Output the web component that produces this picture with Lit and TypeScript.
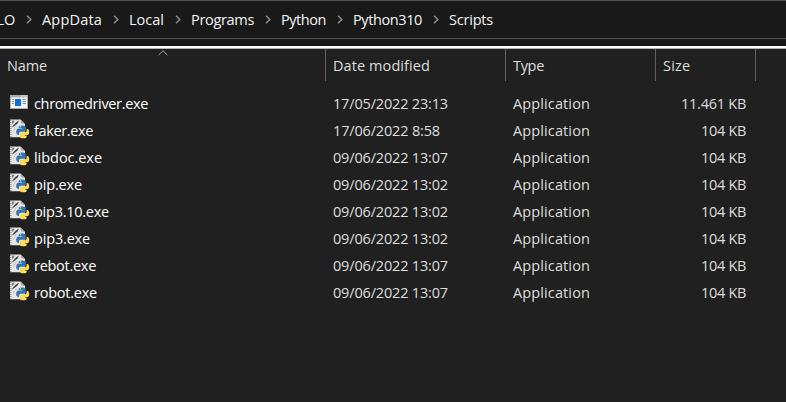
import { LitElement, html, css, svg } from "lit";
import { customElement, property } from "lit/decorators.js";

/* One line of text, spaced to an exact width. */
@customElement("fit-text")
class FitText extends LitElement {
  @property() text = "";
  @property({ type: Number }) w = 0;
  static styles = css`
    :host { display: inline-block; white-space: pre; }
    span { display: inline-block; }
  `;
  render() {
    return html`<span>${this.text}</span>`;
  }
  firstUpdated() {
    const s = this.renderRoot.querySelector("span") as HTMLElement;
    const natural = s.getBoundingClientRect().width;
    s.style.letterSpacing = `${(this.w - natural) / this.text.length}px`;
  }
}

const crumbs: [string, number][] = [
  ["AppData", 60], ["Local", 35], ["Programs", 63],
  ["Python", 45], ["Python310", 69], ["Scripts", 44],
];
const files: [string, number, string, number, string, number][] = [
  ["chromedriver.exe", 114, "17/05/2022 23:13", 115, "11.461 KB", 65],
  ["faker.exe", 59, "17/06/2022 8:58", 107, "104 KB", 45],
  ["libdoc.exe", 68, "09/06/2022 13:07", 115, "104 KB", 45],
  ["pip.exe", 48, "09/06/2022 13:02", 115, "104 KB", 45],
  ["pip3.10.exe", 75, "09/06/2022 13:02", 115, "104 KB", 45],
  ["pip3.exe", 56, "09/06/2022 13:02", 115, "104 KB", 45],
  ["rebot.exe", 62, "09/06/2022 13:07", 115, "104 KB", 45],
  ["robot.exe", 63, "09/06/2022 13:07", 115, "104 KB", 45],
];

const chevron = html`<svg class="chev" width="6" height="9" viewBox="0 0 6 9">
  <path d="M1 .7 4.8 4.5 1 8.3" fill="none" stroke="#8c8c8c" stroke-width="1.5" /></svg>`;

const appIcon = html`<svg width="20" height="20" viewBox="0 0 20 20">
  ${svg`<path d="M0 3h18v14H0z" fill="#a9adb0"/>
  <path d="M1 5.500h16V16H1z" fill="#f4f4f4"/>
  <path d="M11 4h1.300M13.300 4h1.300M15.400 4h1.300" stroke="#fff" stroke-width="1.200"/>
  <path d="M5 7h6v7H5z" fill="#0873d4"/>
  <path d="M2 7.500h2M2 9.500h2M2 11.500h2M12.300 7.500H16M12.300 9.500H16M12.300 11.500H16" stroke="#8e9295"/>`}</svg>`;

const pyIcon = html`<svg width="20" height="20" viewBox="0 0 20 20">
  ${svg`<path d="M0 .4h10.500L15 5v13.200H0z" fill="#e6e6e6"/>
  <path d="M10.500 .4 15 5l-4-.8z" fill="#a8a8a8"/>
  <path d="M.8 1v17" stroke="#888" stroke-width="1.200" stroke-dasharray="1 1"/>
  <path d="M1.500 9 3.500 6 6 3.500 9 1.500 7.500 4.500 5 6.500z" fill="#3c3c3c"/>
  <path d="M2 1.800 4.500 1.500 3.500 4 2 5z" fill="#777"/>
  <path d="M3 13 6.500 7" stroke="#bbb" stroke-width=".8"/>
  <g transform="translate(6.200 6.300)">
    <path d="M3 .8C4-.1 8-.1 9 .8c.5.500.6 1 .6 1.700v2.300c0 1-.7 1.700-1.700 1.700H4.500c-1 0-1.700.8-1.700 1.700v1.400H2C.5 9.600 0 8.200 0 6.500s.8-3.200 2.500-3.200H6v-.6H2.500c0-.9 0-1.400.5-1.900z" fill="#3475ae"/>
    <path d="M10.400 3.600h.9c1.100 0 1.700 1.300 1.700 3.100 0 2.100-.9 3.300-2.300 3.300H7.200v.5h3.200v1c0 1-1.200 1.500-3.200 1.500-2.200 0-3.500-.6-3.500-1.900V8.700c0-.9.600-1.500 1.500-1.500h3.300c1.100 0 1.900-.8 1.900-1.900z" fill="#ffd94f"/>
    <circle cx="4.400" cy="1.500" r=".6" fill="#fff"/>
    <circle cx="8.900" cy="11.500" r=".6" fill="#fff"/>
  </g>`}</svg>`;

@customElement("app-root")
class AppRoot extends LitElement {
  static styles = css`
    :host {
      display: flex; flex-direction: column; box-sizing: border-box;
      width: 786px; height: 402px; overflow: hidden;
      background: #202020; color: #dedede;
      font: 14.5px/20px "Open Sans", "Noto Sans", sans-serif;
    }
    svg { display: block; flex: none; }
    .address {
      display: flex; align-items: center; box-sizing: border-box; height: 39px;
      background: #191919; border-top: 1px solid #535353; border-bottom: 1px solid #535353;
      color: #f4f4f4;
    }
    .drive { width: 15px; display: flex; justify-content: flex-end; }
    .drive fit-text { flex: none; }
    .chev { margin: 0 10px 1px 11px; }
    .gap { height: 7px; background: #191919; }
    .rule { height: 2px; background: #fff; border-bottom: 1px solid #b5b5b5; }
    .head, .row { display: grid; grid-template-columns: 326px 180px 150px 100px; }
    .head { height: 32px; position: relative; margin-bottom: 9px; }
    .head div { border-right: 1px solid #626262; padding: 7px 0 0 7px; box-sizing: border-box; }
    .sort { position: absolute; left: 158px; top: 1px; }
    .row { height: 27px; align-items: center; }
    .cell { padding-left: 7px; display: flex; align-items: center; }
    .name { padding-left: 10px; gap: 4px; color: #fff; }
    .name svg { margin-bottom: 3px; }
    .size { justify-content: flex-end; padding-right: 10px; }
  `;
  render() {
    return html`
      <div class="address">
        <div class="drive"><fit-text text="LO" w="18.5"></fit-text></div>
        ${crumbs.map(([t, w]) => html`${chevron}<fit-text text=${t} w=${w}></fit-text>`)}
      </div>
      <div class="gap"></div>
      <div class="rule"></div>
      <div class="head">
        <div><fit-text text="Name" w="40"></fit-text></div>
        <div><fit-text text="Date modified" w="97"></fit-text></div>
        <div><fit-text text="Type" w="31"></fit-text></div>
        <div><fit-text text="Size" w="27.5"></fit-text></div>
        <svg class="sort" width="10" height="6" viewBox="0 0 10 6">
          <path d="M.7 5 5 .8 9.300 5" fill="none" stroke="#aaa" /></svg>
      </div>
      ${files.map(([n, nw, d, dw, s, sw], i) => html`
        <div class="row">
          <div class="cell name">${i ? pyIcon : appIcon}<fit-text text=${n} w=${nw}></fit-text></div>
          <div class="cell"><fit-text text=${d} w=${dw}></fit-text></div>
          <div class="cell"><fit-text text="Application" w="77"></fit-text></div>
          <div class="cell size"><fit-text text=${s} w=${sw}></fit-text></div>
        </div>`)}
    `;
  }
}
